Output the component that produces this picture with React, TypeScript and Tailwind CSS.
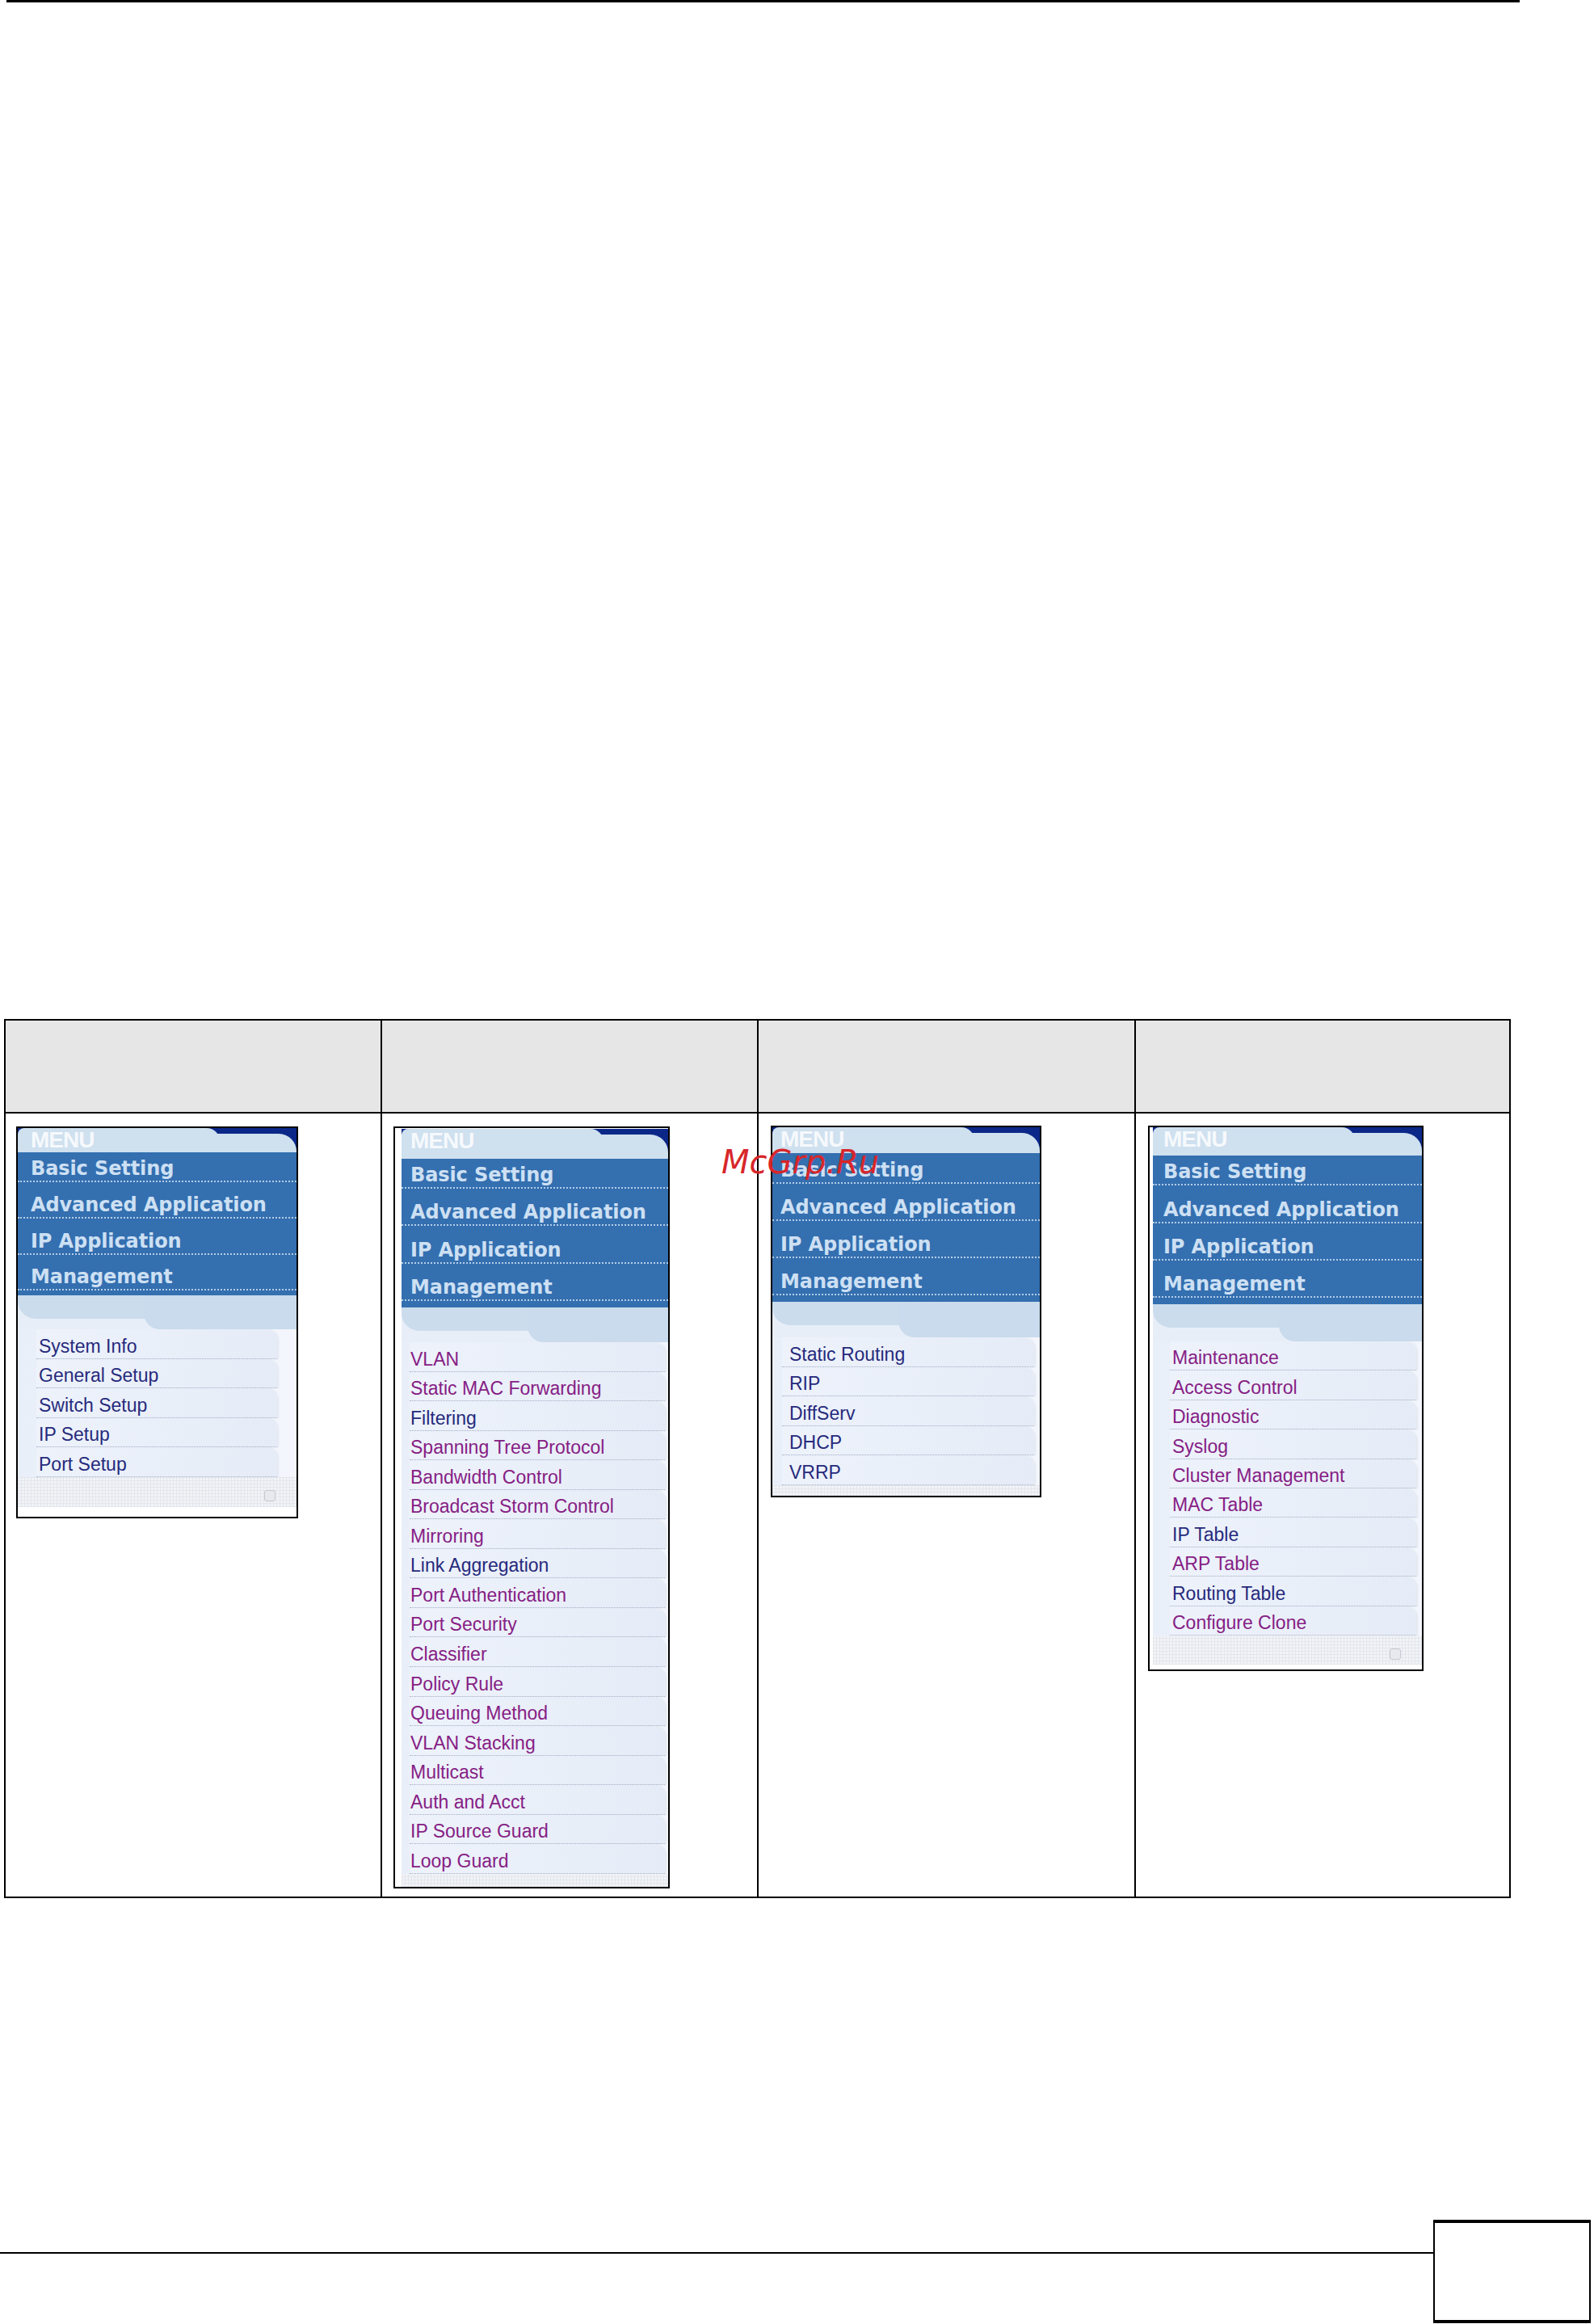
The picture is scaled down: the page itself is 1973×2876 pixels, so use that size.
import React from 'react';

type Item = [string, 'n' | 'p'];

interface MenuConf {
  box: string;
  inner: string;
  header: string;
  menuL: string;
  rows: string[];
  blueL: string;
  tail: string;
  band: string;
  list: string;
  itemH: string;
  itemText: string;
  items: Item[];
  foot: string;
  grid: string;
  icon: boolean;
}

const menus: MenuConf[] = [
  {
    box: 'w-[349px] h-[485px]',
    inner: '',
    header: 'h-[30px]',
    menuL: 'left-[16px]',
    rows: ['h-[37px]', 'h-[45px]', 'h-[45px]', 'h-[44px]'],
    blueL: 'pl-[16px]',
    tail: 'h-[6px]',
    band: 'h-[42px]',
    list: 'pl-[23px] pr-[24px]',
    itemH: 'h-[36.6px]',
    itemText: 'pl-[3px]',
    items: [
      ['System Info', 'n'],
      ['General Setup', 'n'],
      ['Switch Setup', 'n'],
      ['IP Setup', 'n'],
      ['Port Setup', 'n'],
    ],
    foot: 'h-[49px]',
    grid: 'h-[37px]',
    icon: true,
  },
  {
    box: 'w-[342px] h-[943px]',
    inner: 'pl-[8px] pt-[1px]',
    header: 'h-[37px]',
    menuL: 'left-[11px]',
    rows: ['h-[37px]', 'h-[46px]', 'h-[47px]', 'h-[46px]'],
    blueL: 'pl-[11px]',
    tail: 'h-[8px]',
    band: 'h-[43px]',
    list: 'pl-[10px] pr-[4px]',
    itemH: 'h-[36.55px]',
    itemText: 'pl-[1px]',
    items: [
      ['VLAN', 'p'],
      ['Static MAC Forwarding', 'p'],
      ['Filtering', 'n'],
      ['Spanning Tree Protocol', 'p'],
      ['Bandwidth Control', 'p'],
      ['Broadcast Storm Control', 'p'],
      ['Mirroring', 'p'],
      ['Link Aggregation', 'n'],
      ['Port Authentication', 'p'],
      ['Port Security', 'p'],
      ['Classifier', 'p'],
      ['Policy Rule', 'p'],
      ['Queuing Method', 'p'],
      ['VLAN Stacking', 'p'],
      ['Multicast', 'p'],
      ['Auth and Acct', 'p'],
      ['IP Source Guard', 'p'],
      ['Loop Guard', 'p'],
    ],
    foot: 'h-[16px]',
    grid: 'h-[16px]',
    icon: false,
  },
  {
    box: 'w-[335px] h-[460px]',
    inner: '',
    header: 'h-[32px]',
    menuL: 'left-[10px]',
    rows: ['h-[38px]', 'h-[46px]', 'h-[46px]', 'h-[46px]'],
    blueL: 'pl-[10px]',
    tail: 'h-[8px]',
    band: 'h-[44px]',
    list: 'pl-[12px] pr-[7px]',
    itemH: 'h-[36.6px]',
    itemText: 'pl-[9px]',
    items: [
      ['Static Routing', 'n'],
      ['RIP', 'n'],
      ['DiffServ', 'n'],
      ['DHCP', 'n'],
      ['VRRP', 'n'],
    ],
    foot: 'h-[13px]',
    grid: 'h-[13px]',
    icon: false,
  },
  {
    box: 'w-[341px] h-[675px]',
    inner: 'pl-[4px]',
    header: 'h-[35px]',
    menuL: 'left-[13px]',
    rows: ['h-[37px]', 'h-[47px]', 'h-[46px]', 'h-[46px]'],
    blueL: 'pl-[13px]',
    tail: 'h-[8px]',
    band: 'h-[46px]',
    list: 'pl-[21px] pr-[7px]',
    itemH: 'h-[36.4px]',
    itemText: 'pl-[3px]',
    items: [
      ['Maintenance', 'p'],
      ['Access Control', 'p'],
      ['Diagnostic', 'p'],
      ['Syslog', 'p'],
      ['Cluster Management', 'p'],
      ['MAC Table', 'p'],
      ['IP Table', 'n'],
      ['ARP Table', 'p'],
      ['Routing Table', 'n'],
      ['Configure Clone', 'p'],
    ],
    foot: 'h-[42px]',
    grid: 'h-[36px]',
    icon: true,
  },
];

const groups = ['Basic Setting', 'Advanced Application', 'IP Application', 'Management'];

function MenuShot({ m }: { m: MenuConf }) {
  return (
    <div className={`${m.box} border-2 border-black bg-white`}>
      <div className={`flex h-full flex-col ${m.inner}`}>
        {/* MENU title with the navy corner */}
        <div className={`relative ${m.header} shrink-0 bg-[#0b2889]`}>
          <div className="absolute left-0 top-0 h-[16px] w-[250px] rounded-tl-[8px] rounded-tr-[16px] bg-[#cfe0ef]" />
          <div className="absolute inset-x-0 bottom-0 top-[7px] rounded-tr-[22px] bg-[#cfe0ef]" />
          <span
            className={`absolute top-[1px] ${m.menuL} font-['Liberation_Sans',Arial,sans-serif] text-[28px] font-bold leading-[28px] tracking-[-1px] text-[#f6f9fc]`}
          >
            MENU
          </span>
        </div>

        {/* main groups */}
        <div className="shrink-0 bg-[#346fb0]">
          {groups.map((g, i) => (
            <div
              key={g}
              className={`${m.rows[i]} flex items-end border-b-2 border-dotted border-[#b4cde8] pb-[3px] ${m.blueL}`}
            >
              <span className="font-['DejaVu_Sans',Verdana,sans-serif] text-[24px] font-bold leading-none tracking-[-0.1px] text-[#cde0f3]">
                {g}
              </span>
            </div>
          ))}
          <div className={m.tail} />
        </div>

        {/* curved band */}
        <div className={`relative ${m.band} shrink-0 bg-[#e8eef8]`}>
          <div className="absolute inset-x-0 top-0 h-[29px] rounded-bl-[22px] bg-[#cbdcec]" />
          <div className="absolute bottom-0 left-[156px] right-0 top-0 rounded-bl-[20px] bg-[#c9dbec]" />
        </div>

        {/* sub items */}
        <div className={`shrink-0 bg-[linear-gradient(90deg,#e9eff9,#f3f6fc)] ${m.list}`}>
          {m.items.map(([label, c]) => (
            <div
              key={label}
              className={`${m.itemH} flex items-end rounded-tr-[14px] border-b border-dotted border-[#aab2c6] bg-[linear-gradient(90deg,#edf2fb,#e6ecf7)] pb-[3px] shadow-[2px_0_2px_rgba(120,130,160,0.12)] ${m.itemText}`}
            >
              <span
                className={`font-['Liberation_Sans',Arial,sans-serif] text-[23px] leading-none ${
                  c === 'p' ? 'text-[#862084]' : 'text-[#262a7c]'
                }`}
              >
                {label}
              </span>
            </div>
          ))}
        </div>

        {/* footer strip */}
        <div className={`${m.foot} shrink-0 bg-white`}>
          <div
            className={`relative ${m.grid} bg-[#f1f3f7] bg-[repeating-linear-gradient(0deg,#e3e6ec_0px,#e3e6ec_1px,transparent_1px,transparent_4px),repeating-linear-gradient(90deg,#e3e6ec_0px,#e3e6ec_1px,transparent_1px,transparent_4px)]`}
          >
            {m.icon ? (
              <div className="absolute right-[26px] top-[16px] h-[14px] w-[14px] rounded-[3px] border border-[#c4c8d0] bg-[#e7e9ee]" />
            ) : null}
          </div>
        </div>
      </div>
    </div>
  );
}

export default function App() {
  return (
    <div className="relative h-[2876px] w-[1973px] overflow-hidden bg-white font-['Liberation_Sans',Arial,sans-serif]">
      <div className="ml-[8px] h-[3px] w-[1873px] bg-black" />

      <div className="ml-[5px] mt-[1258px] w-[1865px] border-2 border-black">
        <div className="grid grid-cols-[466px_466px_467px_462px]">
          {[0, 1, 2, 3].map((i) => (
            <div
              key={`h${i}`}
              className={`h-[115px] border-b-2 border-black bg-[#e6e6e6] ${i < 3 ? 'border-r-2' : ''}`}
            />
          ))}
          {menus.map((m, i) => (
            <div
              key={`c${i}`}
              className={`h-[969px] border-black ${i < 3 ? 'border-r-2' : ''} ${
                i === 0 ? 'pl-[13px] pt-[16px]' : i === 1 ? 'pl-[14px] pt-[16px]' : 'pl-[15px] pt-[15px]'
              }`}
            >
              <MenuShot m={m} />
            </div>
          ))}
        </div>
      </div>

      <div className="mt-[398px] flex items-start">
        <div className="mt-[40px] h-[2px] w-[1774px] bg-black" />
        <div className="h-[128px] w-[195px] border-x-2 border-y-4 border-black" />
      </div>

      {/* watermark over the third menu */}
      <span className="absolute left-[893px] top-[1418px] font-['DejaVu_Sans',sans-serif] text-[40px] italic leading-none text-[#d8262b]">
        McGrp.Ru
      </span>
    </div>
  );
}
